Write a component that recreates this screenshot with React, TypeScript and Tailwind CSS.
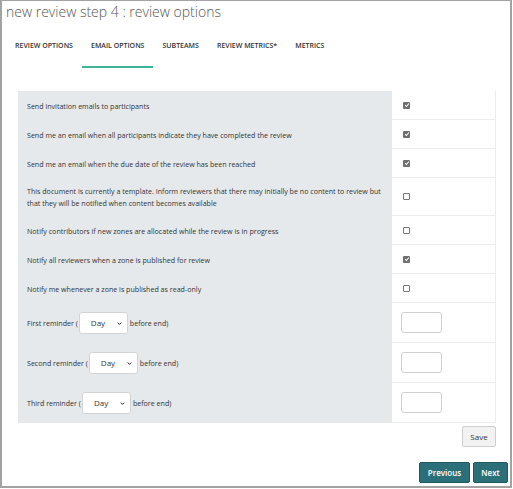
type Row =
	| { kind: "check"; label: string[]; checked: boolean; h: string }
	| { kind: "reminder"; prefix: string };

const TABS = ["REVIEW OPTIONS", "EMAIL OPTIONS", "SUBTEAMS", "REVIEW METRICS*", "METRICS"];

const ROWS: Row[] = [
	{ kind: "check", label: ["Send invitation emails to participants"], checked: true, h: "h-[29px]" },
	{
		kind: "check",
		label: ["Send me an email when all participants indicate they have completed the review"],
		checked: true,
		h: "h-[29px]",
	},
	{
		kind: "check",
		label: ["Send me an email when the due date of the review has been reached"],
		checked: true,
		h: "h-[29px]",
	},
	{
		kind: "check",
		label: [
			"This document is currently a template. Inform reviewers that there may initially be no content to review but",
			"that they will be notified when content becomes available",
		],
		checked: false,
		h: "h-[38px]",
	},
	{
		kind: "check",
		label: ["Notify contributors if new zones are allocated while the review is in progress"],
		checked: false,
		h: "h-[29px]",
	},
	{ kind: "check", label: ["Notify all reviewers when a zone is published for review"], checked: true, h: "h-[29px]" },
	{ kind: "check", label: ["Notify me whenever a zone is published as read-only"], checked: false, h: "h-[29px]" },
	{ kind: "reminder", prefix: "First reminder (" },
	{ kind: "reminder", prefix: "Second reminder (" },
	{ kind: "reminder", prefix: "Third reminder (" },
];

const Checkbox: React.FC<{ checked: boolean }> = ({ checked }) =>
	checked ? (
		<span className="flex h-[7px] w-[7px] items-center justify-center rounded-[1px] bg-[#6f6f6f]">
			<svg viewBox="0 0 8 8" className="h-[6px] w-[6px]">
				<path d="M1.5 4.3 L3.2 6 L6.6 2" fill="none" stroke="#fff" strokeWidth="1.4" />
			</svg>
		</span>
	) : (
		<span className="block h-[7px] w-[7px] rounded-[1px] border border-[#767676] bg-white" />
	);

const DaySelect: React.FC = () => (
	<span className="ml-[1px] mr-[2px] inline-flex h-[22px] w-[49px] items-center justify-between rounded-[3px] border border-[#d4d4d4] bg-white pl-[11px] pr-[5px] align-middle text-[8px] text-[#333]">
		Day
		<svg viewBox="0 0 10 10" className="h-[5px] w-[5px]">
			<path d="M1.5 3.2 L5 6.8 L8.5 3.2" fill="none" stroke="#222" strokeWidth="2" />
		</svg>
	</span>
);

export default function App() {
	return (
		<div
			className="h-[489px] w-[513px] overflow-hidden bg-white text-[#333]"
			style={{ fontFamily: '"Open Sans", "Liberation Sans", sans-serif' }}
		>
			<div className="flex h-[488px] w-[512px] flex-col border-x-2 border-b-2 border-t border-[#a3a3a3]">
				<h1 className="ml-[4px] mt-[1px] text-[14px] font-light leading-[20px] text-[#555]">
					new review step 4 : review options
				</h1>

				<nav className="ml-[4px] mt-[3px] flex">
					{TABS.map((tab) => (
						<div
							key={tab}
							className={`flex h-[43px] items-center border-b-2 px-[9px] pt-[1px] text-[7px] font-semibold ${
								tab === "EMAIL OPTIONS" ? "border-[#3cb49a]" : "border-transparent"
							}`}
						>
							{tab}
						</div>
					))}
				</nav>

				<div className="ml-[16px] mt-[23px] w-[478px]">
					{ROWS.map((row, i) => (
						<div key={i} className={`flex ${row.kind === "reminder" ? "h-[40px]" : row.h}`}>
							<div className="flex w-[374px] items-center bg-[#e6e9ec] pl-[9px] text-[7.1px] leading-[12px] text-[#333]">
								{row.kind === "check" ? (
									<div>
										{row.label.map((line) => (
											<div key={line}>{line}</div>
										))}
									</div>
								) : (
									<div className="flex items-center">
										{row.prefix}
										<DaySelect />
										before end)
									</div>
								)}
							</div>
							<div className="flex flex-1 items-center border-b border-r border-[#ececec] pl-[11px]">
								{row.kind === "check" ? (
									<Checkbox checked={row.checked} />
								) : (
									<span className="-ml-[2px] block h-[21px] w-[41px] rounded-[3px] border border-[#cfcfcf] bg-white" />
								)}
							</div>
						</div>
					))}
				</div>

				<div className="mr-[14px] mt-[3px] flex justify-end">
					<button className="h-[21px] w-[34px] rounded-[2px] border border-[#cfcfcf] bg-[#f2f2f2] text-[8px] text-[#333]">
						Save
					</button>
				</div>

				<div className="mr-[2px] mt-[15px] flex justify-end gap-[3px]">
					<button className="h-[21px] w-[51px] rounded-[2px] border border-[#1f5960] bg-[#2b7078] text-[8px] font-semibold text-white">
						Previous
					</button>
					<button className="h-[21px] w-[35px] rounded-[2px] border border-[#1f5960] bg-[#2b7078] text-[8px] font-semibold text-white">
						Next
					</button>
				</div>
			</div>
		</div>
	);
}
